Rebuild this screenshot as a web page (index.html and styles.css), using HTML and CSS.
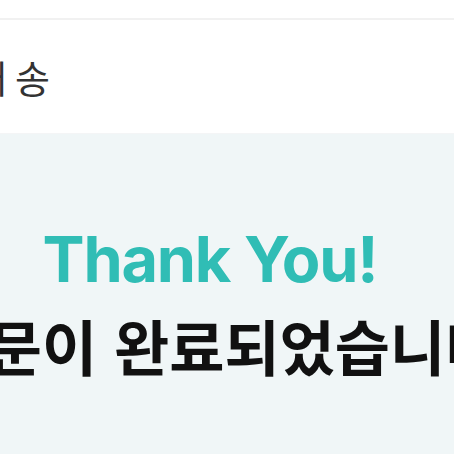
FILE: index.html
```html
<!DOCTYPE html>
<html lang="ko">
<head>
  <meta charset="UTF-8" />
  <title>주문 완료</title>
  <meta name="viewport" content="width=device-width, initial-scale=1.0" />
  <link rel="stylesheet" href="styles.css">
</head>
<body>
  <div class="page">
    <div class="top-space"></div>
    <div class="divider"></div>
    <div class="shipping">
      <span class="shipping-label">배송</span>
    </div>
    <section class="done">
      <div class="done-inner">
        <h2 class="thanks">Thank You!</h2>
        <p class="done-msg">주문이 완료되었습니다</p>
      </div>
    </section>
  </div>
</body>
</html>
```

FILE: styles.css
```css
body {
  margin: 0;
  background: #fff;
  font-family: "Noto Sans CJK KR", "Noto Sans", sans-serif;
  color: #222;
}

.page {
  width: 454px;
  height: 454px;
  overflow: hidden;
}

.top-space {
  height: 18px;
}

.divider {
  height: 2px;
  background: #f1f1f1;
}

.shipping {
  height: 113px;
  display: flex;
  align-items: center;
}

.shipping-label {
  margin-left: -28px;
  font-size: 38px;
  line-height: 1;
  letter-spacing: 8px;
  color: #333;
}

.done {
  height: 321px;
  border-top: 1px solid #f4f5f6;
  background: #f0f6f7;
}

.done-inner {
  width: 440px;
  padding-top: 94px;
  text-align: center;
  white-space: nowrap;
}

.thanks {
  margin: 0;
  padding-right: 20px;
  font-family: Inter, "Liberation Sans", sans-serif;
  font-weight: 700;
  font-size: 63px;
  line-height: 1;
  letter-spacing: -1.2px;
  color: #30bdb5;
}

.done-msg {
  margin: 24px -100px 0;
  padding-right: 8px;
  font-weight: 700;
  font-size: 60px;
  line-height: 1;
  letter-spacing: 0;
  color: #111;
}
```
